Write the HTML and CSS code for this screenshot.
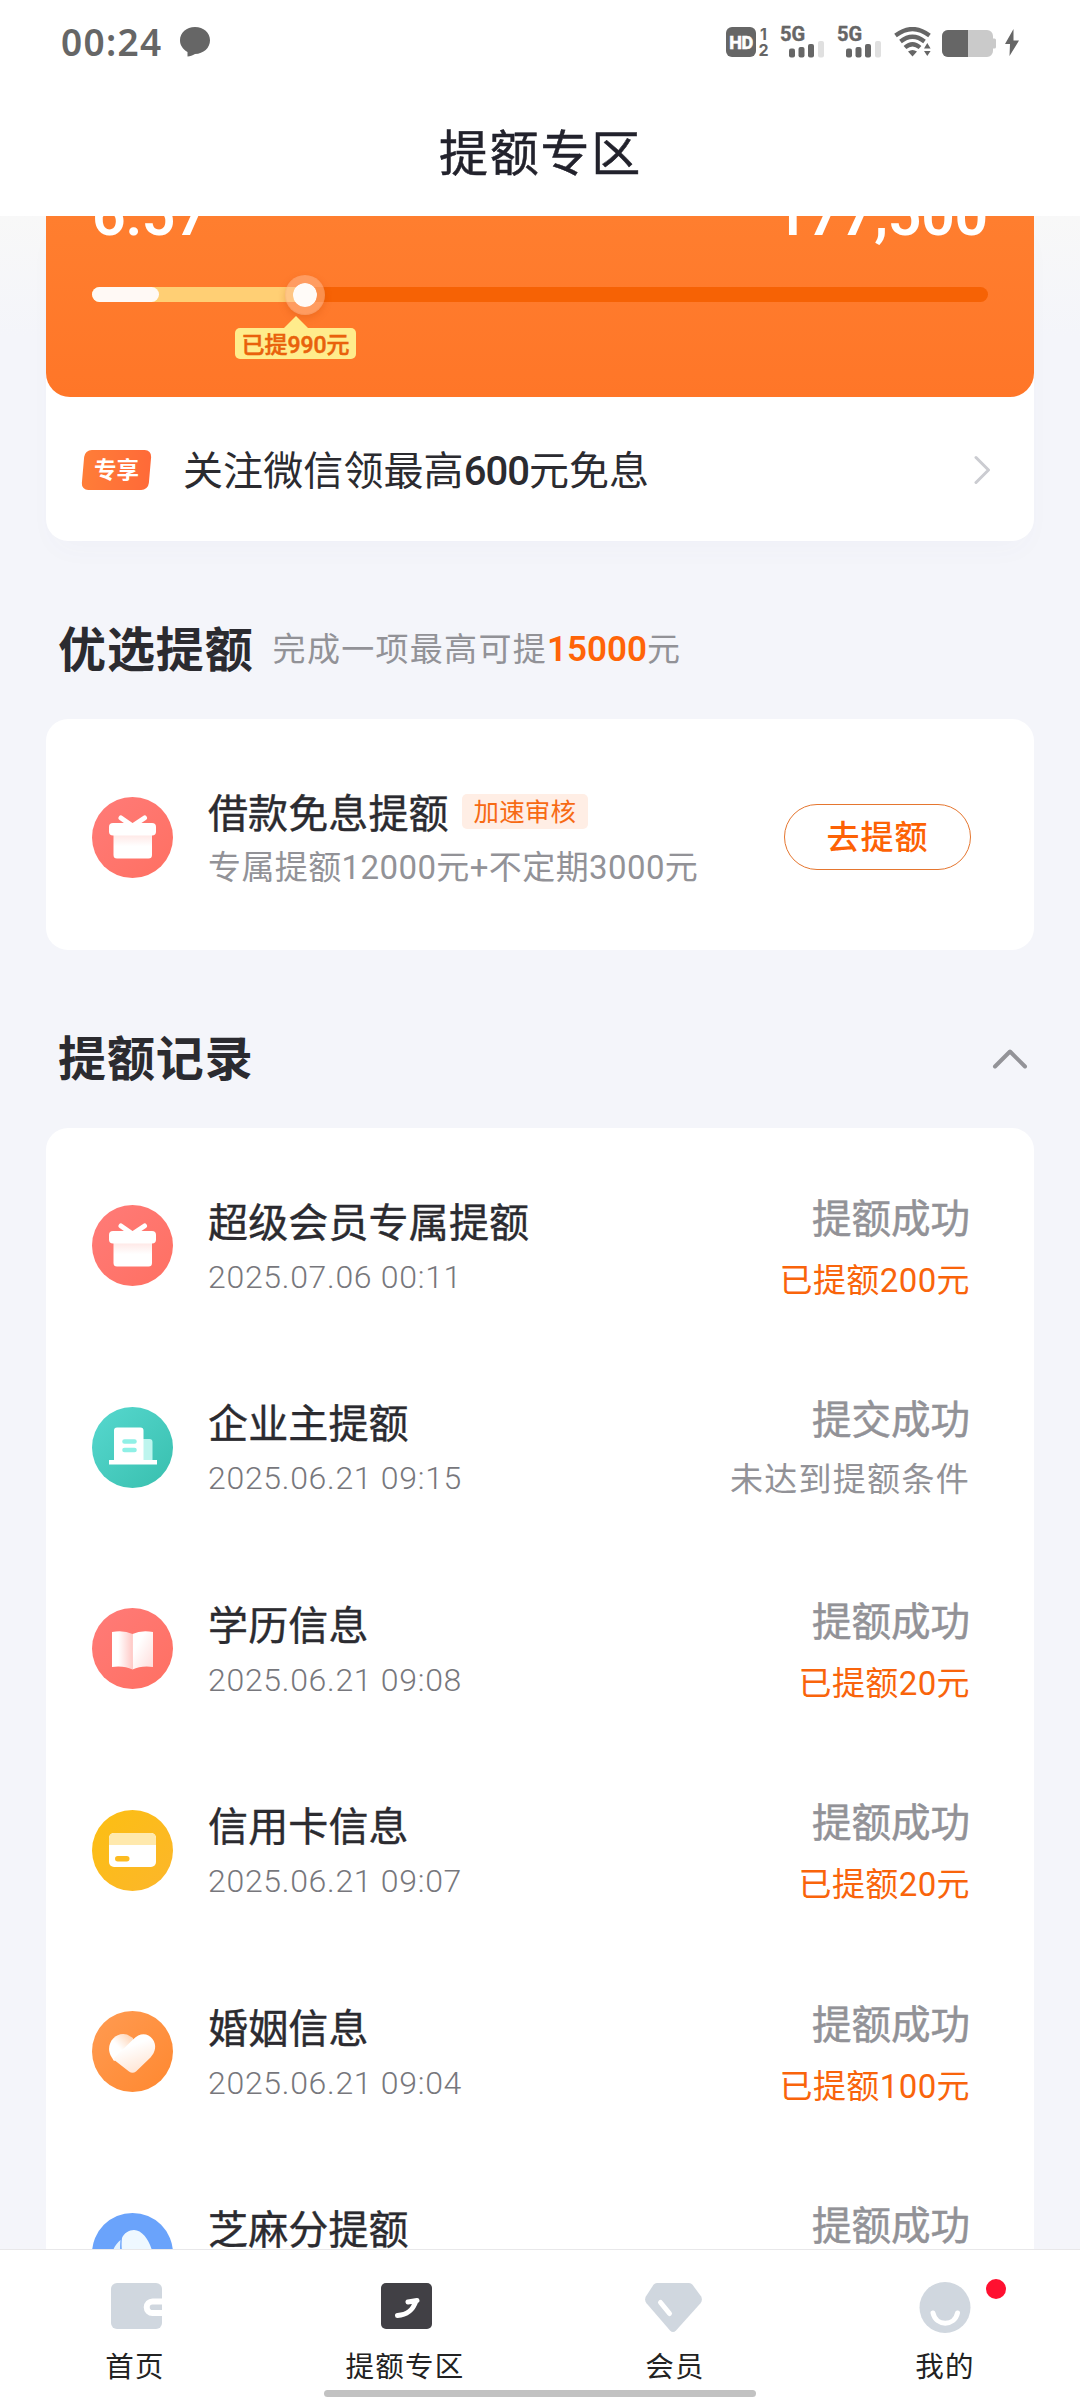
FILE: index.html
```html
<!DOCTYPE html>
<html lang="zh-CN">
<head>
<meta charset="utf-8">
<title>提额专区</title>
<link rel="stylesheet" href="styles.css">
</head>
<body>
<svg class="defs" width="0" height="0" aria-hidden="true">
  <defs>
    <linearGradient id="red" x1="0" y1="0" x2="1" y2="1"><stop offset="0" stop-color="#ff7b78"/><stop offset="1" stop-color="#ff7062"/></linearGradient>
    <linearGradient id="teal" x1="0" y1="0" x2="1" y2="1"><stop offset="0" stop-color="#57d8cf"/><stop offset="1" stop-color="#38bfae"/></linearGradient>
    <linearGradient id="gold" x1="0" y1="0" x2="1" y2="1"><stop offset="0" stop-color="#fcbf12"/><stop offset="1" stop-color="#fcb62b"/></linearGradient>
    <linearGradient id="orange" x1="0" y1="0" x2="1" y2="1"><stop offset="0" stop-color="#ff9b52"/><stop offset="1" stop-color="#ff8830"/></linearGradient>
    <linearGradient id="box" x1="0" y1="0" x2="0" y2="1"><stop offset="0" stop-color="#ffe6e4"/><stop offset=".5" stop-color="#fff"/></linearGradient>
    <linearGradient id="pageL" x1="0" y1="0" x2="1" y2="0"><stop offset=".3" stop-color="#fff"/><stop offset="1" stop-color="#ffc9c6"/></linearGradient>
    <linearGradient id="pageR" x1="0" y1="0" x2="1" y2="1"><stop offset=".3" stop-color="#fff"/><stop offset="1" stop-color="#ffdcda"/></linearGradient>
    <linearGradient id="heartL" x1="0" y1="1" x2="1" y2="0"><stop offset=".45" stop-color="#fff"/><stop offset="1" stop-color="#ffcba5"/></linearGradient>
    <linearGradient id="heartR" x1=".3" y1="0" x2=".7" y2="1"><stop offset=".3" stop-color="#fff"/><stop offset="1" stop-color="#ffe3d1"/></linearGradient>
    <symbol id="gift" viewBox="0 0 81 81">
      <circle cx="40.500" cy="40.500" r="40.500" fill="url(#red)"/>
      <path d="M29 21l11.500 8 12-8" fill="none" stroke="#fff" stroke-width="5" stroke-linecap="round" stroke-linejoin="round"/>
      <path d="M21.500 37h38.500v21a3.500 3.500 0 0 1-3.500 3.500H25a3.500 3.500 0 0 1-3.500-3.500z" fill="url(#box)"/>
      <rect x="17" y="26" width="47" height="12.500" rx="4" fill="#fff"/>
    </symbol>
    <symbol id="company" viewBox="0 0 81 81">
      <circle cx="40.500" cy="40.500" r="40.500" fill="url(#teal)"/>
      <path d="M49 32h8.500a3 3 0 0 1 3 3v19H49z" fill="#bdf5ee"/>
      <path d="M17 53h5V23.500a3 3 0 0 1 3-3h23.500a3 3 0 0 1 3 3V53H65v4.500H17z" fill="#fff"/>
      <path d="M32.500 34.500h10M32.500 43h10" stroke="#8ff0e6" stroke-width="4.600" stroke-linecap="round"/>
    </symbol>
    <symbol id="book" viewBox="0 0 81 81">
      <circle cx="40.500" cy="40.500" r="40.500" fill="url(#red)"/>
      <path d="M20 24q12-2 20.500 2v35.500Q32 57.500 20 59z" fill="url(#pageL)"/>
      <path d="M61 24q-12-2-20.500 2v35.500Q49 57.500 61 59z" fill="url(#pageR)"/>
    </symbol>
    <symbol id="card" viewBox="0 0 81 81">
      <circle cx="40.500" cy="40.500" r="40.500" fill="url(#gold)"/>
      <rect x="17" y="23" width="47" height="34" rx="5" fill="#fff"/>
      <path d="M17 35v-7a5 5 0 0 1 5-5h37a5 5 0 0 1 5 5v7z" fill="#ffe9ad"/>
      <rect x="23" y="46" width="14.500" height="5.500" rx="2.750" fill="#fcbb20"/>
    </symbol>
    <symbol id="heart" viewBox="0 0 81 81">
      <circle cx="40.500" cy="40.500" r="40.500" fill="url(#orange)"/>
      <path d="M22 50L19.500 46C12 34 23 20 35 23.500L41 27 42 38z" fill="url(#heartL)"/>
      <path d="M21 48L41 28.500C48 21 56 22 60.500 28 65 34 63.500 41 58.500 46.500L44 60.500Q40.500 63 37 60.500z" fill="url(#heartR)"/>
    </symbol>
    <symbol id="sesame" viewBox="0 0 81 81">
      <circle cx="40.500" cy="40.500" r="40.500" fill="#6aa3fb"/>
      <path d="M42 17c10 0 19 16 19 28a19 19 0 0 1-18 19C33 56 28 40 30 25c2-5 7-8 12-8z" fill="#eef8ff"/>
      <path d="M28.500 27C20 34 17 46 21 54c4 7 10 10 17 10-8-9-11-23-9.500-37z" fill="#e4f3ff"/>
    </symbol>
    <symbol id="signal" viewBox="0 0 36 17">
      <g fill="#666"><rect x="0" y="7.500" width="6" height="9" rx="2"/><rect x="9.500" y="6" width="6" height="10.500" rx="2"/><rect x="19" y="3" width="6" height="13.500" rx="2"/></g>
      <rect x="29" y="0" width="6" height="16.500" rx="2" fill="#e0e0e0"/>
    </symbol>
  </defs>
</svg>

<div class="app">
  <header class="top">
    <div class="status">
      <div class="status-left">
        <span class="clock">00:24</span>
        <svg width="30" height="30" viewBox="0 0 30 30"><path d="M15 0c8.500 0 15 5.800 15 13.300S23.500 27 15 27c-2.500 1.500-5 2.300-7.500 2.500V25C3 22.500 0 18.500 0 13.300 0 5.800 6.500 0 15 0z" fill="#666"/></svg>
      </div>
      <div class="status-right">
        <span class="hd">HD</span>
        <span class="sims"><span>1</span><span>2</span></span>
        <span class="net"><b>5G</b><svg width="36" height="17"><use href="#signal"/></svg></span>
        <span class="net"><b>5G</b><svg width="36" height="17"><use href="#signal"/></svg></span>
        <svg class="wifi" width="38" height="30" viewBox="0 0 38 30">
          <g fill="none" stroke="#666" stroke-width="4.200"><path d="M1.500 8.500Q18.500-4.500 35.500 8.500"/><path d="M6.500 14.500Q18.500 5 30.500 14.500"/><path d="M11 20.500Q18.500 14 26 20.500"/></g>
          <path d="M14 24.500q4.500-3 9 0L18.500 29.500zM30 21.500l3.300-5.500 3.300 5.500zM30 24h6.600l-3.300 5z" fill="#666"/>
        </svg>
        <svg class="battery" width="54" height="27" viewBox="0 0 54 27"><path d="M6 0h39a6 6 0 0 1 6 6v2.500h1.500a1.500 1.500 0 0 1 1.500 1.500v7a1.500 1.500 0 0 1-1.500 1.500H51V21a6 6 0 0 1-6 6H6a6 6 0 0 1-6-6V6a6 6 0 0 1 6-6z" fill="#cacaca"/><path d="M6 0h20v27H6a6 6 0 0 1-6-6V6a6 6 0 0 1 6-6z" fill="#666"/></svg>
        <svg width="14" height="27" viewBox="0 0 14 27"><path d="M8.500 0L0 15h5l-.500 12L14 11.500H8.500z" fill="#666"/></svg>
      </div>
    </div>
    <h1 class="page-title">提额专区</h1>
  </header>

  <main class="content">
    <section class="quota">
      <div class="quota-main">
        <div class="amounts"><span>6.57</span><span>177,500</span></div>
        <div class="track">
          <div class="track-got"></div>
          <div class="track-base"></div>
          <div class="knob"></div>
          <div class="bubble">已提990元</div>
        </div>
      </div>
      <div class="promo">
        <span class="promo-tag"><span>专享</span></span>
        <span class="promo-text">关注微信领最高<em>600</em>元免息</span>
        <svg width="17" height="30" viewBox="0 0 17 30"><path d="M2 2.500L14.500 15 2 27.500" fill="none" stroke="#cbccd1" stroke-width="3" stroke-linecap="round" stroke-linejoin="round"/></svg>
      </div>
    </section>

    <div class="section-head first">
      <h2>优选提额</h2>
      <p>完成一项最高可提<strong>15000</strong>元</p>
    </div>
    <section class="panel offer">
      <svg class="icon"><use href="#gift"/></svg>
      <div class="offer-info">
        <div class="offer-title">借款免息提额<span class="chip">加速审核</span></div>
        <div class="offer-desc">专属提额12000元+不定期3000元</div>
      </div>
      <button class="go">去提额</button>
    </section>

    <div class="section-head second">
      <h2>提额记录</h2>
      <svg width="38" height="22" viewBox="0 0 38 22"><path d="M4 18.500L19 3.500 34 18.500" fill="none" stroke="#939398" stroke-width="4" stroke-linecap="round" stroke-linejoin="round"/></svg>
    </div>
    <section class="panel records">
      <article class="row"><svg class="icon"><use href="#gift"/></svg><div class="info"><h3>超级会员专属提额</h3><time>2025.07.06 00:11</time></div><div class="result"><span>提额成功</span><b>已提额200元</b></div></article>
      <article class="row"><svg class="icon"><use href="#company"/></svg><div class="info"><h3>企业主提额</h3><time>2025.06.21 09:15</time></div><div class="result"><span>提交成功</span><b class="muted">未达到提额条件</b></div></article>
      <article class="row"><svg class="icon"><use href="#book"/></svg><div class="info"><h3>学历信息</h3><time>2025.06.21 09:08</time></div><div class="result"><span>提额成功</span><b>已提额20元</b></div></article>
      <article class="row"><svg class="icon"><use href="#card"/></svg><div class="info"><h3>信用卡信息</h3><time>2025.06.21 09:07</time></div><div class="result"><span>提额成功</span><b>已提额20元</b></div></article>
      <article class="row"><svg class="icon"><use href="#heart"/></svg><div class="info"><h3>婚姻信息</h3><time>2025.06.21 09:04</time></div><div class="result"><span>提额成功</span><b>已提额100元</b></div></article>
      <article class="row"><svg class="icon"><use href="#sesame"/></svg><div class="info"><h3>芝麻分提额</h3></div><div class="result"><span>提额成功</span></div></article>
    </section>
  </main>

  <nav class="tabs">
    <a class="tab"><svg width="58" height="56" viewBox="0 0 58 56"><rect x="5" y="2" width="51" height="46" rx="6" fill="#d0d7df"/><path d="M56 20.500H46.500a5.800 5.800 0 0 0 0 11.600H56" fill="none" stroke="#fff" stroke-width="6"/></svg>首页</a>
    <a class="tab"><svg width="58" height="56" viewBox="0 0 58 56"><rect x="5" y="2" width="51" height="46" rx="5" fill="#414045"/><path d="M21.500 34.500C31 34 36.500 30 40 20M32 21L41 19.500" fill="none" stroke="#fff" stroke-width="5" stroke-linecap="round"/><path d="M33 20l9-2-3 9z" fill="#fff"/></svg>提额专区</a>
    <a class="tab"><svg width="58" height="56" viewBox="0 0 58 56"><path d="M11 2h32a5 5 0 0 1 3.500 1.800l8.500 11.500q2 3.500-.5 7L30 49.500q-3 3-6 0L.5 22.300q-2.500-3.500-.5-7L7.500 3.800A5 5 0 0 1 11 2z" fill="#d0d7df"/><path d="M14.500 21.500L23.500 32.500" stroke="#fff" stroke-width="5" stroke-linecap="round"/></svg>会员</a>
    <a class="tab"><svg width="58" height="56" viewBox="0 0 58 56"><circle cx="29" cy="26.500" r="25.500" fill="#d0d7df"/><path d="M17 32c3 13.500 21.500 13.500 24.500 0" fill="none" stroke="#fff" stroke-width="5" stroke-linecap="round"/></svg>我的<i class="dot"></i></a>
  </nav>
  <div class="home-bar"></div>
</div>
</body>
</html>
```
FILE: styles.css
```css
* { box-sizing: border-box; margin: 0; padding: 0; }

body {
  width: 1080px;
  height: 2400px;
  overflow: hidden;
  background: #fff;
  color: #2b2b30;
  font-family: Roboto, "Noto Sans CJK SC", sans-serif;
}

.defs { position: absolute; }
svg { display: block; flex: none; }

.app {
  position: relative;
  display: flex;
  flex-direction: column;
  height: 2400px;
}

/* status bar and title */
.top { flex: none; height: 216px; background: #fff; }

.status {
  display: flex;
  justify-content: space-between;
  align-items: center;
  height: 84px;
  padding: 0 61px 0 61px;
  color: #666;
}

.status-left, .status-right { display: flex; align-items: center; }

.clock {
  width: 119px;
  font: 600 37px/84px "Noto Sans", sans-serif;
  letter-spacing: 1.3px;
}

.hd {
  width: 30px;
  height: 30px;
  border-radius: 6px;
  background: #666;
  color: #fff;
  font: 700 18px/31px Roboto, sans-serif;
  letter-spacing: -.5px;
  text-align: center;
  -webkit-text-stroke: .6px #fff;
}

.sims {
  width: 11px;
  margin: 0 11px 0 2px;
  font: 700 16px/16px Inter, sans-serif;
  text-align: center;
}

.sims span { display: block; }

.net {
  display: block;
  width: 45px;
  height: 30px;
  margin-right: 12px;
}

.net b { display: block; height: 14px; font: 700 20px/15px Roboto, sans-serif; -webkit-text-stroke: .4px #666; }
.net svg { margin-left: 9px; }
.wifi { margin-right: 10px; }
.battery { margin-right: 9px; margin-top: 3px; }

.page-title {
  margin-top: 34px;
  font-size: 49px;
  font-weight: 400;
  line-height: 74px;
  letter-spacing: 1.8px;
  text-align: center;
  text-indent: 1px;
  color: #22222c;
  -webkit-text-stroke: .5px #22222c;
}

/* scrolling content */
.content {
  flex: none;
  height: 2033px;
  padding: 0 46px;
  overflow: hidden;
  background: linear-gradient(#f8f8f8 0, #f4f5fa 120px);
}

.quota {
  height: 325px;
  border-radius: 0 0 22px 22px;
  background: #fff;
  box-shadow: 0 14px 30px -8px rgba(90, 100, 150, .03);
}

.quota-main {
  height: 181px;
  padding: 0 46px;
  overflow: hidden;
  border-radius: 0 0 24px 24px;
  background: linear-gradient(#ff7e2f, #ff7628);
}

.amounts {
  display: flex;
  justify-content: space-between;
  height: 71px;
  margin-top: -37px;
  color: #fff;
  font-size: 59px;
  font-weight: 600;
  line-height: 71px;
  letter-spacing: -.3px;
}

.track {
  position: relative;
  height: 15px;
  margin-top: 37px;
  border-radius: 8px;
  background: #f66205;
}

.track-got, .track-base { position: absolute; left: 0; top: 0; height: 15px; border-radius: 8px; }
.track-got { width: 212px; background: #ffcf74; }
.track-base { width: 67px; background: #fff9f5; }

.knob {
  position: absolute;
  left: 193px;
  top: -12px;
  width: 40px;
  height: 40px;
  border: 8px solid rgba(255, 190, 150, .5);
  border-radius: 50%;
  background: #fffbf8;
  background-clip: padding-box;
  box-shadow: 0 3px 7px rgba(190, 70, 0, .25);
}

.bubble {
  position: absolute;
  left: 143px;
  top: 41px;
  width: 121px;
  height: 31px;
  border-radius: 5px;
  background: #ffec8c;
  color: #e9610b;
  font-size: 23px;
  font-weight: 500;
  line-height: 35px;
  text-align: center;
  -webkit-text-stroke: .5px #e9610b;
}

.bubble::before {
  content: "";
  position: absolute;
  left: 49px;
  top: -12px;
  border: 12px solid transparent;
  border-top: 0;
  border-bottom-color: #ffec8c;
}

.promo {
  display: flex;
  align-items: center;
  height: 144px;
  padding: 2px 43px 0 37px;
}

.promo-tag {
  width: 67px;
  height: 40px;
  border-radius: 7px;
  transform: skewX(-5deg);
  background: linear-gradient(90deg, #ff7d38, #ff6a38);
  color: #fff;
  font-size: 22.500px;
  font-weight: 700;
  line-height: 41px;
  text-align: center;
}

.promo-tag span { display: block; transform: skewX(5deg); }
.promo-text { flex: 1; padding: 4px 0 0 33px; font-size: 40px; line-height: 60px; letter-spacing: .1px; }
.promo-text em { font-style: normal; font-weight: 500; letter-spacing: -1px; }

.section-head { display: flex; align-items: center; padding-left: 12px; }
.section-head h2 { font-size: 48px; font-weight: 700; line-height: 72px; letter-spacing: .9px; }
.section-head p { margin-left: 19px; padding-bottom: 2px; font-size: 33px; line-height: 50px; letter-spacing: 1.3px; color: #929297; }
.section-head strong { font-weight: 600; color: #ff6408; font-size: 35px; letter-spacing: 0; }
.first { height: 178px; padding-top: 42px; }
.second { height: 178px; justify-content: space-between; padding-right: 5px; padding-top: 42px; }
.second svg { margin-top: -2px; }

.panel { border-radius: 22px; background: #fff; }

.icon { width: 81px; height: 81px; }

.offer {
  display: flex;
  align-items: center;
  height: 231px;
  padding: 5px 63px 0 46px;
}

.offer-info { flex: 1; padding: 7px 0 0 35px; }
.offer-title { display: flex; align-items: center; font-size: 40px; line-height: 54px; letter-spacing: .1px; }
.offer-desc { font-size: 33px; line-height: 52px; letter-spacing: .4px; color: #929297; white-space: nowrap; }

.chip {
  height: 35px;
  margin: -6px 0 0 13px;
  padding: 0 12px;
  border-radius: 5px;
  background: #ffeee5;
  color: #f76a14;
  font-size: 25.500px;
  line-height: 37px;
}

.go {
  width: 187px;
  height: 66px;
  border: 1.500px solid #e5762f;
  border-radius: 33px;
  background: #fff;
  color: #fd6205;
  font: 500 33px/61px Roboto, "Noto Sans CJK SC", sans-serif;
  letter-spacing: 1px;
}

.records { height: 1300px; padding: 17px 64px 0 46px; }

.row { display: flex; align-items: center; height: 201.500px; }
.info { flex: 1; height: 122px; padding-left: 35px; padding-top: 9px; }
.info h3, .offer-title { font-weight: 400; -webkit-text-stroke: .4px #2b2b30; }
.info h3 { font-size: 40px; line-height: 60px; letter-spacing: .15px; }
.chip { -webkit-text-stroke: 0; }
.info time { display: block; height: 46px; font-size: 32px; line-height: 46px; font-weight: 300; color: #77777c; letter-spacing: .7px; }

.result { height: 122px; padding-top: 5px; text-align: right; }
.result span { display: block; font-size: 39.500px; line-height: 60px; color: #929297; -webkit-text-stroke: .5px #929297; }
.result b { display: block; font-size: 33px; line-height: 61px; font-weight: 400; letter-spacing: .4px; color: #f9640b; }
.result .muted { color: #929297; letter-spacing: 1.300px; line-height: 58px; }

/* bottom navigation */
.tabs {
  display: flex;
  flex: none;
  height: 151px;
  border-top: 1px solid #e8e8ea;
  background: #fff;
}

.tab {
  position: relative;
  display: flex;
  flex: 1;
  flex-direction: column;
  align-items: center;
  padding-top: 31px;
  font-size: 28.500px;
  line-height: 44px;
  letter-spacing: 1.2px;
  color: #222;
}

.tab svg { margin-bottom: 9px; overflow: visible; }

.dot {
  position: absolute;
  left: 176px;
  top: 29px;
  width: 20px;
  height: 20px;
  border-radius: 50%;
  background: #ff1030;
}

.home-bar {
  position: absolute;
  left: 324px;
  bottom: 3px;
  width: 432px;
  height: 7px;
  border-radius: 4px;
  background: #c2c2c2;
}
```
